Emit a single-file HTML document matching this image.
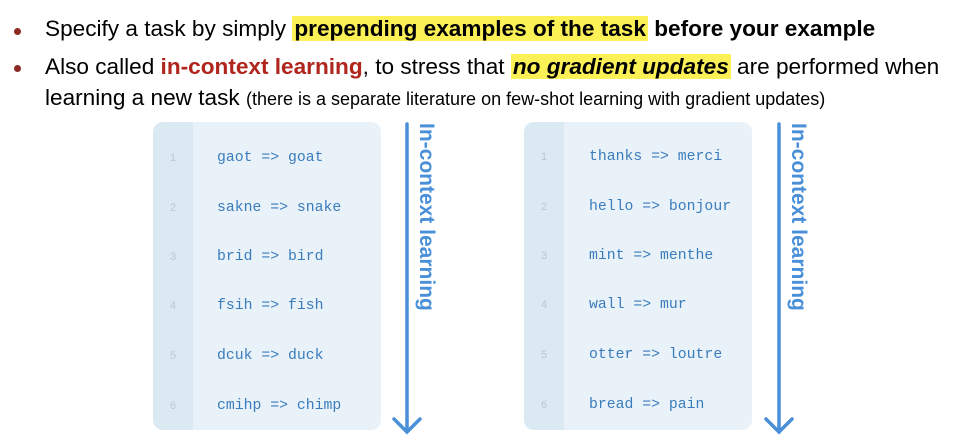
<!DOCTYPE html>
<html><head><style>
body{margin:0;width:975px;height:440px;background:#fff;position:relative;overflow:hidden;font-family:"Liberation Sans",sans-serif;}
.l{position:absolute;left:45px;font-size:22.6px;color:#000;white-space:nowrap;}
.b{position:absolute;left:14px;width:7px;height:7px;border-radius:50%;background:#8b2a22;}
.hl{background:#fbf157;font-weight:bold;padding:0 2px;}
.red{color:#b0261c;font-weight:bold;}
.panel{position:absolute;top:122px;width:228px;height:308px;background:#e9f2f8;border-radius:10px;overflow:hidden;}
.gut{position:absolute;left:0;top:0;bottom:0;width:40px;background:#dbe9f2;}
.row{position:absolute;font-family:"Liberation Mono",monospace;font-size:14.8px;color:#3a7cbc;}
.num{position:absolute;font-size:11px;color:#b8c8d4;width:40px;text-align:center;}
.vt{position:absolute;top:123px;font-weight:bold;font-size:21px;color:#4a90d9;transform-origin:0 0;transform:rotate(90deg);white-space:nowrap;}
</style></head><body>
<div class="b" style="top:28px"></div>
<div class="l" style="top:16px">Specify a task by simply <span class="hl">prepending examples of the task</span> <b>before your example</b></div>
<div class="b" style="top:65px"></div>
<div class="l" style="top:54px">Also called <span class="red">in-context learning</span>, to stress that <span class="hl" style="font-style:italic">no gradient updates</span> are performed when</div>
<div class="l" style="top:85px">learning a new task <span style="font-size:18px">(there is a separate literature on few-shot learning with gradient updates)</span></div>

<div class="panel" style="left:153px"><div class="gut"></div>
<div class="num" style="top:30px">1</div><div class="row" style="left:64px;top:28px">gaot =&gt; goat</div>
<div class="num" style="top:80px">2</div><div class="row" style="left:64px;top:78px">sakne =&gt; snake</div>
<div class="num" style="top:129px">3</div><div class="row" style="left:64px;top:127px">brid =&gt; bird</div>
<div class="num" style="top:178px">4</div><div class="row" style="left:64px;top:176px">fsih =&gt; fish</div>
<div class="num" style="top:228px">5</div><div class="row" style="left:64px;top:226px">dcuk =&gt; duck</div>
<div class="num" style="top:278px">6</div><div class="row" style="left:64px;top:276px">cmihp =&gt; chimp</div>
</div>
<div class="panel" style="left:524px"><div class="gut"></div>
<div class="num" style="top:29px">1</div><div class="row" style="left:65px;top:27px">thanks =&gt; merci</div>
<div class="num" style="top:79px">2</div><div class="row" style="left:65px;top:77px">hello =&gt; bonjour</div>
<div class="num" style="top:128px">3</div><div class="row" style="left:65px;top:126px">mint =&gt; menthe</div>
<div class="num" style="top:177px">4</div><div class="row" style="left:65px;top:175px">wall =&gt; mur</div>
<div class="num" style="top:227px">5</div><div class="row" style="left:65px;top:225px">otter =&gt; loutre</div>
<div class="num" style="top:277px">6</div><div class="row" style="left:65px;top:275px">bread =&gt; pain</div>
</div>

<svg style="position:absolute;left:0;top:0" width="975" height="440">
<g stroke="#4a90d9" stroke-width="3.5" fill="none" stroke-linecap="round">
<path d="M407 124V431M394 419L407 432L420 419"/>
<path d="M779 124V431M766 419L779 432L792 419"/>
</g></svg>
<div class="vt" style="left:438px">In-context learning</div>
<div class="vt" style="left:810px">In-context learning</div>
</body></html>
